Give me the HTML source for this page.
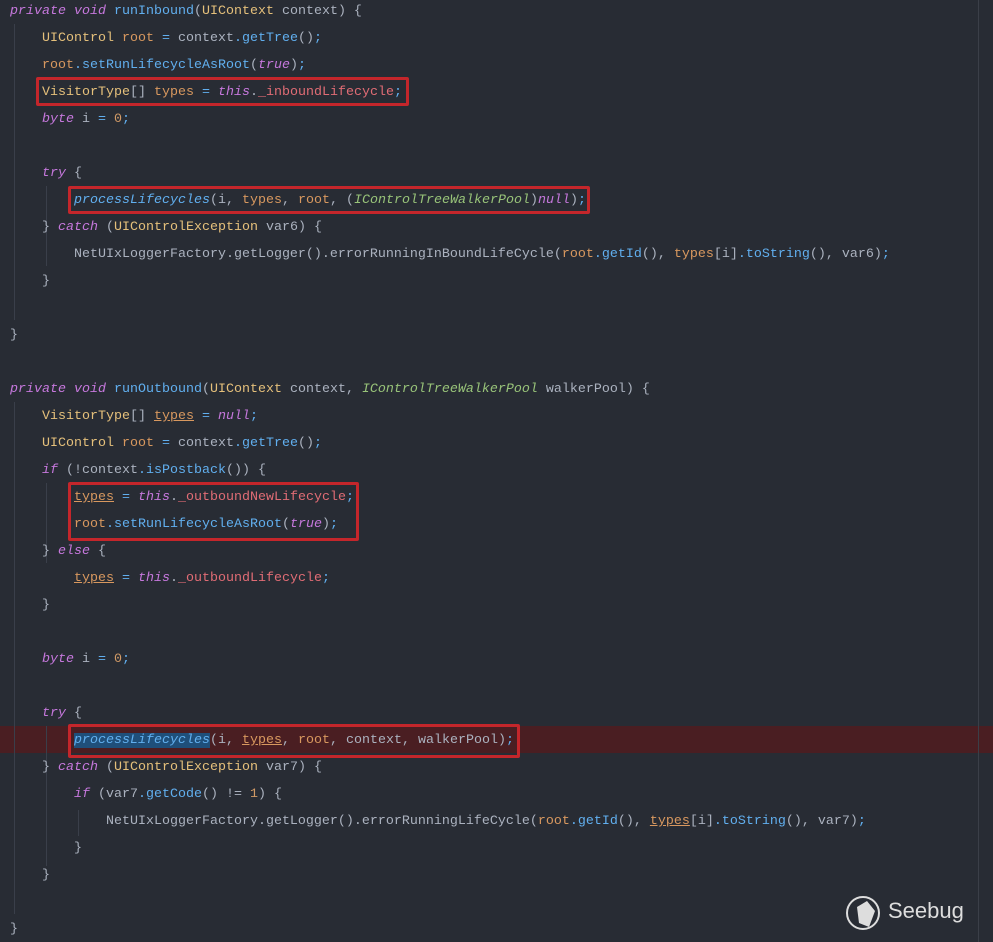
<!DOCTYPE html>
<html><head><meta charset="utf-8"><style>
html,body{margin:0;padding:0;background:#282c34;width:993px;height:942px;overflow:hidden;position:relative}
.code{position:absolute;left:10px;top:-2px;font-family:"Liberation Mono",monospace;font-size:13.33px;color:#abb2bf}
.l{height:27px;line-height:27px;white-space:pre}
.k{color:#c678dd;font-style:italic}
.t{color:#e5c07b}
.v{color:#d8985f}
.m{color:#61afef}
.mi{color:#61afef;font-style:italic}
.f{color:#e06c75}
.g{color:#98c379;font-style:italic}
.n{color:#d19a66}
.p{color:#61afef}
.u{color:#d8985f;text-decoration:underline}
.box{position:absolute;border:3px solid #c4262b;border-radius:2px;box-sizing:border-box}
.guide{position:absolute;width:1px;background:#3a3f4a}
.hl{position:absolute;left:0;width:993px;top:726px;height:27px;background:#4a1e22}
.sel{background:#1f4f7a}
</style></head><body>
<div class="hl"></div>
<div class="guide" style="left:14px;top:24px;height:296px"></div>
<div class="guide" style="left:14px;top:402px;height:512px"></div>
<div class="guide" style="left:46px;top:186px;height:80px"></div>
<div class="guide" style="left:46px;top:483px;height:80px"></div>
<div class="guide" style="left:46px;top:726px;height:140px"></div>
<div class="guide" style="left:78px;top:810px;height:26px"></div>
<div class="guide" style="left:978px;top:0;height:942px;background:#3b3f48"></div>
<div class="code"><div class="l"><span class="k">private void</span> <span class="m">runInbound</span>(<span class="t">UIContext</span> context) {</div><div class="l">    <span class="t">UIControl</span> <span class="v">root</span> <span class="p">=</span> context<span class="p">.</span><span class="m">getTree</span>()<span class="p">;</span></div><div class="l">    <span class="v">root</span><span class="p">.</span><span class="m">setRunLifecycleAsRoot</span>(<span class="k">true</span>)<span class="p">;</span></div><div class="l">    <span class="t">VisitorType</span>[] <span class="v">types</span> <span class="p">=</span> <span class="k">this</span>.<span class="f">_inboundLifecycle</span><span class="p">;</span></div><div class="l">    <span class="k">byte</span> i <span class="p">=</span> <span class="n">0</span><span class="p">;</span></div><div class="l"> </div><div class="l">    <span class="k">try</span> {</div><div class="l">        <span class="mi">processLifecycles</span>(i, <span class="v">types</span>, <span class="v">root</span>, (<span class="g">IControlTreeWalkerPool</span>)<span class="k">null</span>)<span class="p">;</span></div><div class="l">    } <span class="k">catch</span> (<span class="t">UIControlException</span> var6) {</div><div class="l">        NetUIxLoggerFactory.getLogger().errorRunningInBoundLifeCycle(<span class="v">root</span><span class="p">.</span><span class="m">getId</span>(), <span class="v">types</span>[i]<span class="p">.</span><span class="m">toString</span>(), var6)<span class="p">;</span></div><div class="l">    }</div><div class="l"> </div><div class="l">}</div><div class="l"> </div><div class="l"><span class="k">private void</span> <span class="m">runOutbound</span>(<span class="t">UIContext</span> context, <span class="g">IControlTreeWalkerPool</span> walkerPool) {</div><div class="l">    <span class="t">VisitorType</span>[] <span class="u">types</span> <span class="p">=</span> <span class="k">null</span><span class="p">;</span></div><div class="l">    <span class="t">UIControl</span> <span class="v">root</span> <span class="p">=</span> context<span class="p">.</span><span class="m">getTree</span>()<span class="p">;</span></div><div class="l">    <span class="k">if</span> (!context<span class="p">.</span><span class="m">isPostback</span>()) {</div><div class="l">        <span class="u">types</span> <span class="p">=</span> <span class="k">this</span>.<span class="f">_outboundNewLifecycle</span><span class="p">;</span></div><div class="l">        <span class="v">root</span><span class="p">.</span><span class="m">setRunLifecycleAsRoot</span>(<span class="k">true</span>)<span class="p">;</span></div><div class="l">    } <span class="k">else</span> {</div><div class="l">        <span class="u">types</span> <span class="p">=</span> <span class="k">this</span>.<span class="f">_outboundLifecycle</span><span class="p">;</span></div><div class="l">    }</div><div class="l"> </div><div class="l">    <span class="k">byte</span> i <span class="p">=</span> <span class="n">0</span><span class="p">;</span></div><div class="l"> </div><div class="l">    <span class="k">try</span> {</div><div class="l">        <span class="mi sel">processLifecycles</span>(i, <span class="u">types</span>, <span class="v">root</span>, context, walkerPool)<span class="p">;</span></div><div class="l">    } <span class="k">catch</span> (<span class="t">UIControlException</span> var7) {</div><div class="l">        <span class="k">if</span> (var7<span class="p">.</span><span class="m">getCode</span>() != <span class="n">1</span>) {</div><div class="l">            NetUIxLoggerFactory.getLogger().errorRunningLifeCycle(<span class="v">root</span><span class="p">.</span><span class="m">getId</span>(), <span class="u">types</span>[i]<span class="p">.</span><span class="m">toString</span>(), var7)<span class="p">;</span></div><div class="l">        }</div><div class="l">    }</div><div class="l"> </div><div class="l">}</div></div>
<div class="box" style="left:36px;top:77px;width:373px;height:29px"></div>
<div class="box" style="left:68px;top:186px;width:522px;height:28px"></div>
<div class="box" style="left:68px;top:482px;width:291px;height:59px"></div>
<div class="box" style="left:68px;top:724px;width:452px;height:34px"></div>
<svg style="position:absolute;left:845px;top:893px" width="40" height="40" viewBox="0 0 40 40">
<circle cx="18" cy="20" r="16" fill="none" stroke="#ddd" stroke-width="2"/>
<path d="M12 14 L22 8 L30 18 L24 34 L14 30 Z" fill="#ddd"/>
</svg>
<div style="position:absolute;left:888px;top:898px;font-family:'Liberation Sans',sans-serif;font-size:22px;color:#ddd">Seebug</div>
</body></html>
